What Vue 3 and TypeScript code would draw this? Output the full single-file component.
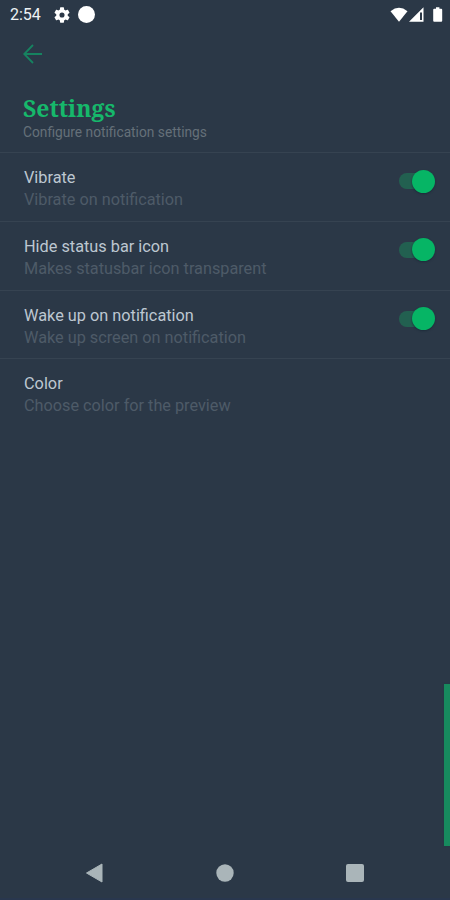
<script setup lang="ts">
import { ref } from 'vue'

interface SettingRow {
  title: string
  detail: string
  enabled?: boolean
}

const rows = ref<SettingRow[]>([
  { title: 'Vibrate', detail: 'Vibrate on notification', enabled: true },
  { title: 'Hide status bar icon', detail: 'Makes statusbar icon transparent', enabled: true },
  { title: 'Wake up on notification', detail: 'Wake up screen on notification', enabled: true },
  { title: 'Color', detail: 'Choose color for the preview' },
])

function toggle(row: SettingRow) {
  if (row.enabled !== undefined) row.enabled = !row.enabled
}
</script>

<template>
  <main class="screen">
    <div class="status">
      <span class="time">2:54</span>
      <svg class="gear" viewBox="2 2 20 20" width="16" height="16">
        <path fill="#fff" fill-rule="evenodd" d="M19.14 12.94c.04-.3.06-.61.06-.94s-.02-.64-.07-.94l2.03-1.58a.49.49 0 0 0 .12-.61l-1.92-3.32a.49.49 0 0 0-.59-.22l-2.39.96c-.5-.38-1.03-.7-1.62-.94l-.36-2.54a.48.48 0 0 0-.48-.41h-3.84a.48.48 0 0 0-.47.41l-.36 2.54c-.59.24-1.13.57-1.62.94l-2.39-.96a.48.48 0 0 0-.59.22L2.74 8.87a.48.48 0 0 0 .12.61l2.03 1.58c-.05.3-.09.63-.09.94s.02.64.07.94l-2.03 1.58a.49.49 0 0 0-.12.61l1.92 3.32c.12.22.37.29.59.22l2.39-.96c.5.38 1.03.7 1.62.94l.36 2.54c.05.24.24.41.48.41h3.84c.24 0 .44-.17.47-.41l.36-2.54c.59-.24 1.13-.56 1.62-.94l2.39.96c.22.08.47 0 .59-.22l1.92-3.32a.48.48 0 0 0-.12-.61zM12 15.2a3.2 3.2 0 1 1 0-6.4 3.2 3.2 0 0 1 0 6.4z" />
      </svg>
      <span class="dot" />
      <svg class="signals" viewBox="0 0 54 18" width="54" height="18">
        <path fill="#fff" d="M.5 5.2Q9 -1.7 17.500 5.200L9 15.700z" />
        <path fill="#fff" fill-rule="evenodd" d="M33.500 1.200V15.700H19zM32 6.500H30V13.900H32z" />
        <path fill="#fff" d="M44.200 2.700h1.800V1.200h3.400v1.500h1.800q1 0 1 1v11q0 1-1 1h-7q-1 0-1-1v-11q0-1 1-1z" />
      </svg>
    </div>
    <header class="header">
      <button class="back" aria-label="Back">
        <svg viewBox="0 0 20 20" width="20" height="20">
          <path d="M19 10H1.500M10 1L1.200 10L10 19" fill="none" stroke="#168360" stroke-width="1.800" />
        </svg>
      </button>
      <h1>Settings</h1>
      <p>Configure notification settings</p>
    </header>
    <section class="list">
      <div v-for="row in rows" :key="row.title" class="row" @click="toggle(row)">
        <div class="labels">
          <div class="title">{{ row.title }}</div>
          <div class="detail">{{ row.detail }}</div>
        </div>
        <span v-if="row.enabled !== undefined" class="switch" :class="{ off: !row.enabled }">
          <span class="thumb" />
        </span>
      </div>
    </section>
    <div class="edge" />
    <nav class="nav">
      <svg viewBox="0 0 20 20" width="20" height="20"><path d="M2.500 10L18 1V19z" fill="#aab5b9" stroke="#aab5b9" stroke-linejoin="round" /></svg>
      <svg viewBox="0 0 20 20" width="20" height="20"><circle cx="10" cy="10" r="8.700" fill="#aab5b9" /></svg>
      <svg viewBox="0 0 20 20" width="20" height="20"><rect x="1" y="1" width="18" height="18" rx="2" fill="#aab5b9" /></svg>
    </nav>
  </main>
</template>

<style>
body {
  margin: 0;
  background: #2b3847;
}
</style>

<style scoped>
.screen {
  position: relative;
  box-sizing: border-box;
  display: flex;
  flex-direction: column;
  width: 450px;
  height: 900px;
  overflow: hidden;
  background: #2b3847;
  border-bottom: 2px solid #29374e;
  font-family: Roboto, sans-serif;
}
.status {
  display: flex;
  align-items: center;
  height: 29px;
  padding: 0 6px 0 10px;
}
.time {
  width: 44px;
  color: #eef2f5;
  font-size: 16px;
  line-height: 30px;
}
.gear {
  margin-right: 8px;
}
.dot {
  width: 17px;
  height: 17px;
  border-radius: 50%;
  background: #fff;
}
.signals {
  margin-left: auto;
}
.header {
  box-sizing: border-box;
  height: 123px;
  padding: 15px 23px 0;
}
.back {
  display: block;
  width: 20px;
  height: 20px;
  padding: 0;
  border: 0;
  background: none;
}
h1 {
  width: max-content;
  margin: 30px 0 0;
  color: #16b86b;
  font: bold 23px/28px "Noto Serif", "DejaVu Serif Condensed", "DejaVu Serif", serif;
  font-stretch: condensed;
}
p {
  width: max-content;
  margin: 1px 0 0;
  color: #657079;
  font-size: 13.750px;
  line-height: 18px;
}
.row {
  box-sizing: border-box;
  display: flex;
  justify-content: space-between;
  height: 68.800px;
  padding: 14px 15px 0 24px;
  border-top: 1px solid #364351;
}
.title {
  width: max-content;
  color: #bdc7d1;
  font-size: 16.300px;
  line-height: 22px;
}
.detail {
  width: max-content;
  color: #4e5b68;
  font-size: 16.250px;
  line-height: 22px;
}
.switch {
  display: flex;
  align-items: center;
  justify-content: flex-end;
  width: 36px;
  height: 16px;
  margin-top: 6px;
  border-radius: 8px;
  background: linear-gradient(90deg, #226050 28px, transparent 28px);
}
.switch.off {
  justify-content: flex-start;
}
.thumb {
  width: 23px;
  height: 23px;
  border-radius: 50%;
  background: #06b565;
  box-shadow: 0 1px 2px #1d2c3b;
}
.edge {
  width: 6px;
  height: 162px;
  margin: auto 0 0 auto;
  background: #178a5e;
  box-shadow: 0 0 2px #1e3d42;
}
.nav {
  box-sizing: border-box;
  display: flex;
  justify-content: space-between;
  align-items: center;
  height: 52px;
  padding: 2px 85px 0 84px;
}
</style>
